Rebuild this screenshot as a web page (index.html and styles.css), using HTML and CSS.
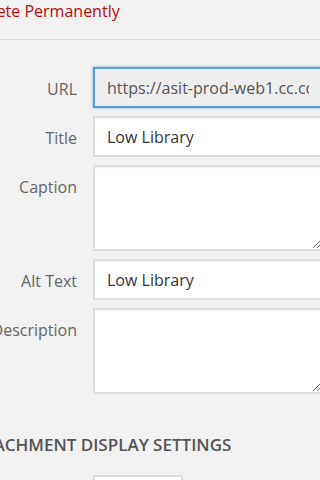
FILE: index.html
```html
<!DOCTYPE html>
<html lang="en">

<head>
    <meta charset="UTF-8">
    <meta name="viewport" content="width=device-width, initial-scale=1.0">
    <title>Attachment Details</title>
    <link rel="stylesheet" href="styles.css">
</head>

<body>

    <div class="panel">
        <!-- Attachment actions -->
        <div class="actions">
            <a href="#" class="delete-link">Delete Permanently</a>
        </div>

        <div class="settings">
            <label class="setting">
                <span class="name">URL</span>
                <input type="text" class="field is-focused" value="https://asit-prod-web1.cc.columbia.edu/wp-content/uploads/low-library.jpg" readonly>
            </label>
            <label class="setting">
                <span class="name">Title</span>
                <input type="text" class="field" value="Low Library">
            </label>
            <label class="setting">
                <span class="name">Caption</span>
                <textarea class="field field-area"></textarea>
            </label>
            <label class="setting">
                <span class="name">Alt Text</span>
                <input type="text" class="field" value="Low Library">
            </label>
            <label class="setting">
                <span class="name">Description</span>
                <textarea class="field field-area"></textarea>
            </label>
        </div>

        <h2 class="section-title">Attachment Display Settings</h2>

        <div class="setting">
            <span class="name">Alignment</span>
            <div class="select-box"></div>
        </div>
    </div>

</body>

</html>
```

FILE: styles.css
```css
body {
    font-family: 'Open Sans', sans-serif;
    font-size: 16px;
    background-color: #f1f1f1;
    color: #444;
    margin: 0;
    padding: 0;
    overflow: hidden;
}

.panel {
    margin-left: -28px;
    width: 420px;
}

.actions {
    height: 39px;
    border-bottom: 1px solid #dddddd;
    line-height: 22px;
}

.delete-link {
    color: #bc0b0b;
    text-decoration: none;
}

.settings {
    padding-top: 27px;
    display: flex;
    flex-direction: column;
    gap: 8px;
}

.setting {
    display: flex;
    align-items: flex-start;
    gap: 16px;
}

.setting .name {
    width: 105px;
    flex-shrink: 0;
    text-align: right;
    color: #666;
    line-height: 22px;
    padding-top: 11px;
    white-space: nowrap;
}

.field {
    box-sizing: border-box;
    width: 230px;
    height: 41px;
    margin: 0;
    padding: 0 12px;
    font-family: 'Open Sans', sans-serif;
    font-size: 16px;
    color: #32373c;
    background-color: #fff;
    border: 2px solid #dddddd;
    box-shadow: inset 0 1px 2px rgba(0, 0, 0, 0.07);
    outline: none;
}

.field.is-focused {
    background-color: #eeeeee;
    border-color: #5b9dd9;
    box-shadow: 0 0 2px rgba(30, 140, 190, 0.8);
    color: #555;
}

.field-area {
    height: 86px;
    padding: 8px 12px;
    resize: vertical;
}

.section-title {
    margin: 40px 0 19px -9px;
    font-size: 17px;
    font-weight: 600;
    line-height: 22px;
    text-transform: uppercase;
    color: #555;
}

.select-box {
    box-sizing: border-box;
    width: 90px;
    height: 40px;
    background-color: #fff;
    border: 2px solid #dddddd;
}
```
